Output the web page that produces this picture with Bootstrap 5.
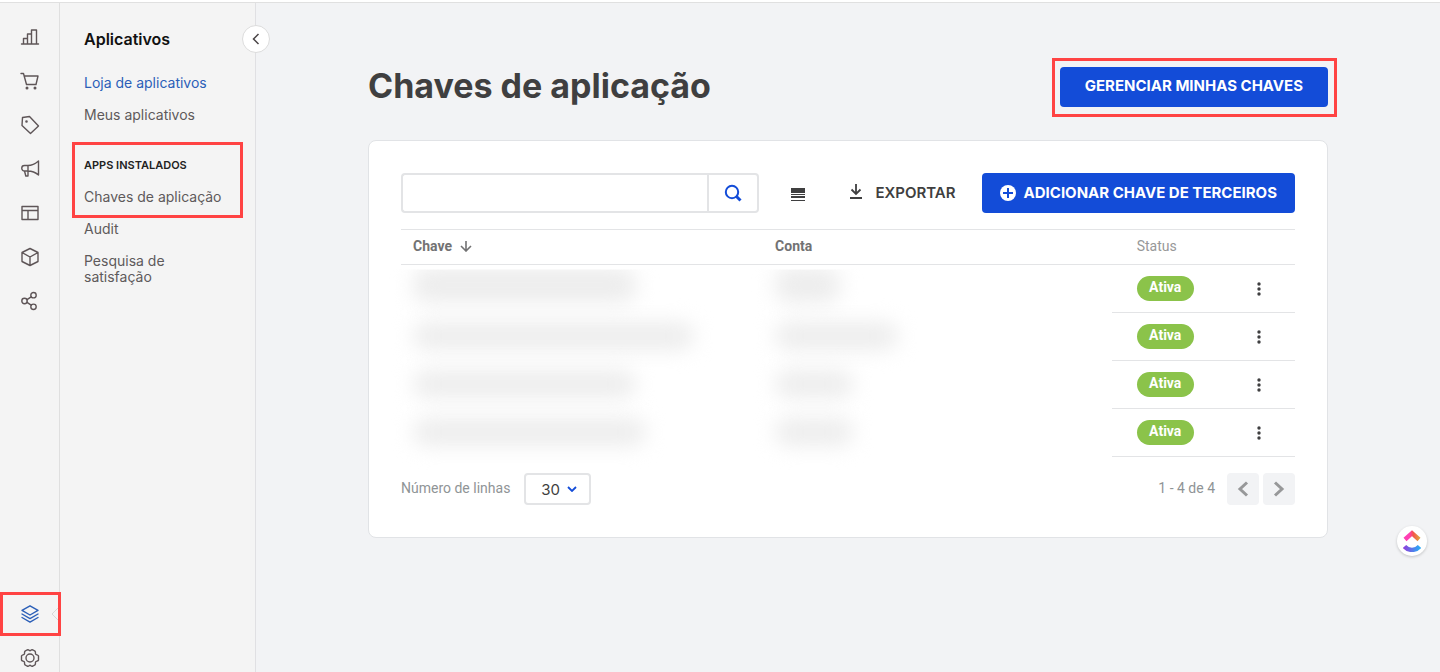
<!DOCTYPE html>
<html lang="pt-BR">
<head>
<meta charset="utf-8">
<meta name="viewport" content="width=device-width, initial-scale=1">
<title>Chaves de aplicação</title>
<link href="https://cdn.jsdelivr.net/npm/bootstrap@5.3.0/dist/css/bootstrap.min.css" rel="stylesheet">
<style>
  :root { --brand: #134cd8; --line: #e3e4e6; --alert: #ff4343; --ink: #3f3f40; --canvas: #f2f3f5; }
  body { font-family: Inter, "Liberation Sans", sans-serif; background: #fff; color: var(--ink); font-size: 14px; }
  .shell { border-top: 1px solid #e0e0e0; margin-top: 2px; height: calc(100vh - 2px); background: var(--canvas); }
  svg { display: block; }

  /* icon rail */
  .rail { width: 60px; flex: none; background: #f4f4f4; border-right: 1px solid #dfdfdf; padding-top: 12px; margin-bottom: -8px; }
  .rail-item { height: 44px; color: #5e5557; display: flex; align-items: center; justify-content: center; position: relative; }
  .rail-item svg { width: 20px; height: 20px; fill: none; stroke: currentColor; stroke-width: 1.4; stroke-linejoin: round; stroke-linecap: round; }
  .rail-item.current { color: #2b5fb8; z-index: 1; }
  .rail-item.current::after { content: ""; position: absolute; inset: 0 -2px 0 0; border: 3px solid var(--alert); }
  .rail-item .notch { position: absolute; right: 0; width: 8px; height: 14px; stroke: #d8d8d8; stroke-width: 1; }

  /* section panel */
  .side { width: 196px; flex: none; background: #f4f4f4; border-right: 1px solid #e0e0e3; padding: 24px; position: relative; }
  .side h2 { font-size: 16px; line-height: 24px; font-weight: 600; color: #111; margin: 0 0 16px; }
  .side a { display: block; padding: 8px 0; line-height: 16px; color: #5e5a5b; text-decoration: none; }
  .side a.current { color: #2b5fb8; }
  .side h3 { font-size: 11px; line-height: 16px; font-weight: 600; color: #222; margin: 0; padding-bottom: 8px; }
  .installed { margin-top: 26px; position: relative; }
  .installed::after { content: ""; position: absolute; inset: -15px -12px -5px; border: 3px solid var(--alert); pointer-events: none; }
  .collapse-btn { position: absolute; top: 22px; right: -15px; width: 28px; height: 28px; border: 1px solid #dcdcdc; background: #fff; border-radius: 50%; padding: 0; color: #4a4446; display: flex; align-items: center; justify-content: center; }

  /* content */
  .content { max-width: 960px; padding-top: 64px; }
  h1 { font-size: 34px; line-height: 38px; font-weight: 700; }
  .btn-brand { --bs-btn-bg: var(--brand); --bs-btn-color: #fff; --bs-btn-hover-bg: #0f41bb; --bs-btn-hover-color: #fff; --bs-btn-border-width: 0; height: 40px; border-radius: 4px; padding: 0 18px; font-size: 15px; font-weight: 700; white-space: nowrap; }
  .flagged { position: relative; }
  .flagged .btn { padding: 0 25px 1px; }
  .flagged::after { content: ""; position: absolute; inset: -9px -9px -10px -8px; border: 3px solid var(--alert); pointer-events: none; }
  .panel { background: #fff; border: 1px solid #e1e3e6; border-radius: 8px; padding: 32px; margin-top: 33px; }
  .finder { width: 40%; height: 40px; flex: none; }
  .finder input { border: 2px solid var(--line); border-right: 0; border-radius: 4px 0 0 4px; }
  .finder button { width: 52px; flex: none; border: 2px solid var(--line); color: var(--brand); background: #fff; border-radius: 0 4px 4px 0; padding: 0; display: flex; align-items: center; justify-content: center; }
  .plain { border: 0; background: none; color: var(--ink); padding: 0; display: flex; align-items: center; }
  .export { font-size: 15px; font-weight: 600; gap: 12px; margin-right: 26px; }

  .keys { table-layout: fixed; width: 100%; margin-top: 16px; font-family: Roboto, "Liberation Sans", sans-serif; }
  .keys th { height: 35px; border-top: 1px solid var(--line); border-bottom: 1px solid var(--line); padding: 0 12px 2px; line-height: 20px; color: #727273; font-weight: 700; }
  .keys th.soft { font-weight: 400; color: #979899; padding-left: 25px; }
  .keys td { height: 48px; padding: 0 12px; }
  .keys .status { padding-left: 25px; border-bottom: 1px solid var(--line); }
  .keys .more { padding-left: 20px; border-bottom: 1px solid var(--line); }
  .state { display: block; width: 57px; height: 25px; line-height: 22px; border-radius: 13px; background: #8bc34a; color: #fff; font-weight: 700; text-align: center; }
  .veil { display: block; height: 28px; border-radius: 14px; background: #ededed; filter: blur(10px); margin-top: -2px; }
  .first .veil { height: 36px; margin-top: -8px; }
  .first .hidden-data { clip-path: inset(5px -20px -20px -20px); }

  .foot { margin-top: 16px; font-family: Roboto, "Liberation Sans", sans-serif; color: #8f9496; }
  .foot label, .foot .range { padding-bottom: 2px; }
  .rows-select { width: 67px; height: 32px; margin-left: 14px; border: 2px solid var(--line); border-radius: 4px; padding: 0 0 0 15px; font: 15px Inter, sans-serif; color: var(--ink); appearance: none;
    background: #fff url("data:image/svg+xml,%3Csvg xmlns='http://www.w3.org/2000/svg' viewBox='0 0 10 6' fill='none' stroke='%23134cd8' stroke-width='1.8'%3E%3Cpath d='M1 1l4 4 4-4'/%3E%3C/svg%3E") no-repeat right 12px center / 10px 6px; }
  .pager { width: 32px; height: 32px; border: 0; border-radius: 4px; background: var(--canvas); color: #979899; padding: 0; display: flex; align-items: center; justify-content: center; }
  .assist { position: fixed; right: 13px; bottom: 116px; width: 30px; height: 30px; border: 0; border-radius: 50%; background: #fff; padding: 0; box-shadow: 0 1px 3px #0003; display: flex; align-items: center; justify-content: center; }
</style>
</head>
<body>
<div class="shell d-flex overflow-hidden">
  <nav class="rail d-flex flex-column" aria-label="Principal">
    <a class="rail-item" href="#" aria-label="Relatórios"><svg viewBox="0 0 20 20"><path d="M1.500 17h17M3.500 17v-5.500h4V17M7.500 11.500V7h4v10M11.500 7V3h5v14"/></svg></a>
    <a class="rail-item" href="#" aria-label="Pedidos"><svg viewBox="0 0 20 20"><path d="M1 2.500h2.500l3 11h9.500M4 5h14l-2 8.500"/><circle cx="7" cy="17" r=".8" fill="currentColor"/><circle cx="15" cy="17" r=".8" fill="currentColor"/></svg></a>
    <a class="rail-item" href="#" aria-label="Catálogo"><svg viewBox="0 0 20 20"><path d="M2.500 2.500L9.500 1.500l9 9.500-8 7.500L2 10.500z"/><circle cx="6.500" cy="6.500" r=".6"/></svg></a>
    <a class="rail-item" href="#" aria-label="Promoções"><svg viewBox="0 0 20 20"><path d="M8 6.500c4 0 7-1.500 10.500-4.500v14c-3.500-3-6.500-4-10.500-4H4.500a2.700 2.700 0 0 1 0-5.500H8zm0 0V12M4.500 12l1.300 5H8V12"/></svg></a>
    <a class="rail-item" href="#" aria-label="Vitrine"><svg viewBox="0 0 20 20"><path d="M2 3.500h16v13H2zM2 7.500h16M8 7.500v9"/></svg></a>
    <a class="rail-item" href="#" aria-label="Estoque"><svg viewBox="0 0 20 20"><path d="M10 1.500l8 4v9l-8 4-8-4v-9zM2 5.500l8 4.500 8-4.500M10 10v8.500"/></svg></a>
    <a class="rail-item" href="#" aria-label="Compartilhar"><svg viewBox="0 0 20 20"><circle cx="4.500" cy="10" r="2.700"/><circle cx="13.500" cy="4.200" r="2.700"/><circle cx="13.500" cy="15.800" r="2.700"/><path d="M7 8.700l4.200-2.900M7 11.300l4.200 2.900"/></svg></a>
    <a class="rail-item current mt-auto" href="#" aria-label="Aplicativos"><svg viewBox="0 0 20 20"><path d="M10 1.800l8 4.600-8 4.600-8-4.600zM2 10l8 4.600 8-4.600M2 13.500l8 4.600 8-4.600"/></svg><svg class="notch" viewBox="0 0 8 14"><path d="M8 0L1 7l7 7"/></svg></a>
    <a class="rail-item" href="#" aria-label="Configurações"><svg viewBox="0 0 20 20"><circle cx="10" cy="10" r="4"/><path d="M7 2c2-.8 2 .7 3 .7s1-1.500 3-.7l2 1.200c1 1.300.1 1.700.6 2.800s2.600.8 2.900 2v4c-.3 1.200-2.400.9-2.900 2s.4 1.500-.6 2.800L13 18c-2 .8-2-.7-3-.7s-1 1.500-3 .7l-2-1.200c-1-1.300-.1-1.700-.6-2.800s-2.600-.8-2.900-2V8c.3-1.200 2.400-.9 2.900-2S4 4.500 5 3.200z"/></svg></a>
  </nav>

  <aside class="side">
    <h2>Aplicativos</h2>
    <button class="collapse-btn" type="button" aria-label="Recolher menu"><svg width="8" height="12" viewBox="0 0 8 12" fill="none" stroke="currentColor" stroke-width="1.500"><path d="M6.500 1l-5 5 5 5"/></svg></button>
    <a class="current" href="#">Loja de aplicativos</a>
    <a href="#">Meus aplicativos</a>
    <div class="installed">
      <h3>APPS INSTALADOS</h3>
      <a href="#">Chaves de aplicação</a>
    </div>
    <a href="#">Audit</a>
    <a href="#">Pesquisa de satisfação</a>
  </aside>

  <main class="flex-grow-1">
    <div class="content mx-auto">
      <header class="d-flex justify-content-between">
        <h1 class="m-0">Chaves de aplicação</h1>
        <div class="flagged"><button class="btn btn-brand" type="button">GERENCIAR MINHAS CHAVES</button></div>
      </header>

      <section class="panel">
        <div class="d-flex align-items-center">
          <form class="finder d-flex" role="search">
            <input class="form-control" type="search" aria-label="Buscar chave">
            <button type="button" aria-label="Buscar"><svg width="18" height="18" viewBox="0 0 18 18" fill="none" stroke="currentColor"><circle cx="8" cy="8" r="6.200" stroke-width="2"/><path d="M12.500 12.500l4 4" stroke-width="3"/></svg></button>
          </form>
          <div class="d-flex flex-grow-1 align-items-center ps-4 ms-2">
            <button class="plain" type="button" aria-label="Densidade das linhas"><svg width="14" height="16" viewBox="0 0 14 16" fill="currentColor"><path d="M0 3h14v5H0zM0 9h14v1H0zM0 11h14v2H0zM0 15h14v1H0z"/></svg></button>
            <button class="plain export ms-auto" type="button"><svg width="14" height="18" viewBox="0 0 14 18" fill="none" stroke="currentColor" stroke-width="1.800"><path d="M7 0v10M2.500 5.500L7 10l4.500-4.500M1 14h12"/></svg>EXPORTAR</button>
            <button class="btn btn-brand d-flex align-items-center gap-2" type="button"><svg width="16" height="16" viewBox="0 0 16 16"><circle cx="8" cy="8" r="8" fill="#fff"/><path d="M8 3v10M3 8h10" stroke="#134cd8" stroke-width="2"/></svg>ADICIONAR CHAVE DE TERCEIROS</button>
          </div>
        </div>

        <table class="keys">
          <colgroup><col style="width:40.500%"><col style="width:39%"><col style="width:14%"><col></colgroup>
          <thead>
            <tr>
              <th scope="col"><span class="d-flex align-items-center gap-2">Chave <svg width="12" height="12" viewBox="0 0 12 12" fill="none" stroke="currentColor" stroke-width="1.600"><path d="M6 1v10M1 6l5 5 5-5"/></svg></span></th>
              <th scope="col">Conta</th>
              <th scope="col" class="soft">Status</th>
              <th aria-label="Ações"></th>
            </tr>
          </thead>
          <tbody>
            <tr class="first"><td class="hidden-data"><span class="veil" style="width:66%"></span></td><td class="hidden-data"><span class="veil" style="width:20%"></span></td><td class="status"><span class="state">Ativa</span></td><td class="more"><button class="plain" type="button" aria-label="Mais ações"><svg width="4" height="14" viewBox="0 0 4 14" fill="currentColor"><circle cx="2" cy="2" r="1.700"/><circle cx="2" cy="7" r="1.700"/><circle cx="2" cy="12" r="1.700"/></svg></button></td></tr>
            <tr><td><span class="veil" style="width:83%"></span></td><td><span class="veil" style="width:38%"></span></td><td class="status"><span class="state">Ativa</span></td><td class="more"><button class="plain" type="button" aria-label="Mais ações"><svg width="4" height="14" viewBox="0 0 4 14" fill="currentColor"><circle cx="2" cy="2" r="1.700"/><circle cx="2" cy="7" r="1.700"/><circle cx="2" cy="12" r="1.700"/></svg></button></td></tr>
            <tr><td><span class="veil" style="width:66%"></span></td><td><span class="veil" style="width:24%"></span></td><td class="status"><span class="state">Ativa</span></td><td class="more"><button class="plain" type="button" aria-label="Mais ações"><svg width="4" height="14" viewBox="0 0 4 14" fill="currentColor"><circle cx="2" cy="2" r="1.700"/><circle cx="2" cy="7" r="1.700"/><circle cx="2" cy="12" r="1.700"/></svg></button></td></tr>
            <tr><td><span class="veil" style="width:69%"></span></td><td><span class="veil" style="width:24%"></span></td><td class="status"><span class="state">Ativa</span></td><td class="more"><button class="plain" type="button" aria-label="Mais ações"><svg width="4" height="14" viewBox="0 0 4 14" fill="currentColor"><circle cx="2" cy="2" r="1.700"/><circle cx="2" cy="7" r="1.700"/><circle cx="2" cy="12" r="1.700"/></svg></button></td></tr>
          </tbody>
        </table>

        <div class="foot d-flex align-items-center">
          <label for="rows">Número de linhas</label>
          <select id="rows" class="rows-select"><option>30</option><option>50</option></select>
          <span class="range ms-auto me-2 pe-1">1 - 4 de 4</span>
          <button class="pager me-1" type="button" aria-label="Página anterior"><svg width="12" height="16" viewBox="0 0 12 16" fill="none" stroke="currentColor" stroke-width="3"><path d="M10 1.500L3 8l7 6.500"/></svg></button>
          <button class="pager" type="button" aria-label="Próxima página"><svg width="12" height="16" viewBox="0 0 12 16" fill="none" stroke="currentColor" stroke-width="3"><path d="M2 1.500L9 8l-7 6.500"/></svg></button>
        </div>
      </section>
    </div>
  </main>
</div>

<button class="assist" type="button" aria-label="Assistente">
  <svg width="18" height="22" viewBox="0 0 18 22" fill="none" stroke-width="4.500">
    <defs>
      <linearGradient id="warm"><stop offset=".3" stop-color="#ff3fb4"/><stop offset=".6" stop-color="#f4574a"/><stop offset="1" stop-color="#e0a040"/></linearGradient>
      <linearGradient id="cool"><stop offset="0" stop-color="#8a45dd"/><stop offset="1" stop-color="#2aa8f5"/></linearGradient>
    </defs>
    <path d="M2 9.500L9 3.200l7 6.300" stroke="url(#warm)"/>
    <path d="M1.500 16.500c4 4.500 11 4.500 15 0" stroke="url(#cool)"/>
  </svg>
</button>
<script src="https://cdn.jsdelivr.net/npm/bootstrap@5.3.0/dist/js/bootstrap.bundle.min.js"></script>
</body>
</html>
